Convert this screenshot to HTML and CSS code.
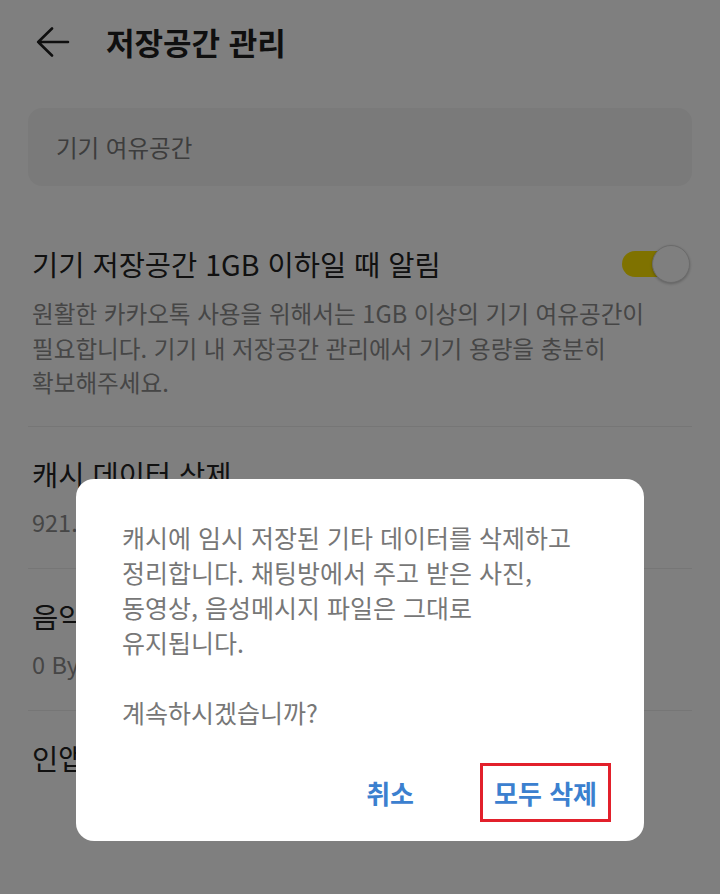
FILE: index.html
```html
<!DOCTYPE html>
<html lang="ko">
<head>
<meta charset="utf-8">
<title>저장공간 관리</title>
<link rel="stylesheet" href="styles.css">
</head>
<body>
<div class="screen">
  <header class="appbar">
    <svg class="back" width="34" height="30" viewBox="0 0 34 30" aria-hidden="true">
      <path d="M16 1.5 L2.2 15 L16 28.5 M2.2 15 H32" fill="none" stroke="#1e1e1e" stroke-width="2.6" stroke-linecap="round" stroke-linejoin="round"/>
    </svg>
    <h1 class="title">저장공간 관리</h1>
  </header>

  <div class="card"><span class="card-label">기기 여유공간</span></div>

  <section class="setting">
    <div class="setting-head">
      <span class="row-title">기기 저장공간 1GB 이하일 때 알림</span>
      <span class="toggle"><span class="track"></span><span class="knob"></span></span>
    </div>
    <p class="desc">원활한 카카오톡 사용을 위해서는 1GB 이상의 기기 여유공간이<br>필요합니다. 기기 내 저장공간 관리에서 기기 용량을 충분히<br>확보해주세요.</p>
  </section>

  <section class="item">
    <div class="row-title">캐시 데이터 삭제</div>
    <div class="row-sub">921.55 MB</div>
  </section>
  <section class="item">
    <div class="row-title">음악 캐시 데이터 삭제</div>
    <div class="row-sub">0 Bytes</div>
  </section>
  <section class="item last">
    <div class="row-title">인앱 브라우저 캐시 삭제</div>
  </section>
</div>

<div class="overlay">
  <div class="dialog" role="dialog">
    <p class="dialog-text">캐시에 임시 저장된 기타 데이터를 삭제하고<br>정리합니다. 채팅방에서 주고 받은 사진,<br>동영상, 음성메시지 파일은 그대로<br>유지됩니다.<br><br>계속하시겠습니까?</p>
    <div class="dialog-actions">
      <button class="btn" type="button">취소</button>
      <button class="btn btn-highlight" type="button">모두 삭제</button>
    </div>
  </div>
</div>
</body>
</html>
```

FILE: styles.css
```css
* { box-sizing: border-box; }

html, body {
  margin: 0;
  padding: 0;
  width: 720px;
  height: 894px;
  overflow: hidden;
  background: #ffffff;
  font-family: "Noto Sans CJK KR", "Noto Sans", Roboto, sans-serif;
}

.screen {
  width: 720px;
  height: 894px;
  background: #ffffff;
}

.appbar {
  height: 84px;
  display: flex;
  align-items: center;
  padding-left: 36px;
  gap: 36px;
}

.back { display: block; flex: none; }

.title {
  margin: 0;
  font-size: 31px;
  font-weight: 700;
  line-height: 36px;
  color: #1e1e1e;
}

.card {
  margin: 24px 28px 0;
  height: 78px;
  border-radius: 14px;
  background: #f5f5f5;
  display: flex;
  align-items: center;
  padding-left: 28px;
}

.card-label {
  font-size: 23.5px;
  line-height: 30px;
  color: #7a7a7a;
}

.setting {
  margin: 0 28px;
  padding: 60px 2px 26px 4px;
  border-bottom: 1px solid #ededed;
}

.setting-head {
  height: 36px;
  display: flex;
  align-items: center;
  justify-content: space-between;
}

.row-title {
  font-size: 28.5px;
  line-height: 36px;
  color: #222222;
  white-space: nowrap;
}

.toggle {
  display: flex;
  align-items: center;
}

.track {
  width: 49px;
  height: 26px;
  border-radius: 13px;
  background: #fee500;
}

.knob {
  width: 38px;
  height: 38px;
  margin-left: -19px;
  border-radius: 50%;
  background: #ffffff;
  border: 1.5px solid #d6d6d6;
  box-shadow: 0 1px 3px rgba(0, 0, 0, 0.25);
}

.desc {
  margin: 14px 0 0;
  font-size: 23.6px;
  line-height: 34.5px;
  color: #8c8c8c;
  white-space: nowrap;
}

.item {
  margin: 0 28px;
  padding: 29px 2px 31px 4px;
  border-bottom: 1px solid #ededed;
}

.item.last { border-bottom: none; }

.row-sub {
  margin-top: 15px;
  font-size: 23.5px;
  line-height: 30px;
  color: #8c8c8c;
}

.overlay {
  position: fixed;
  inset: 0;
  background: rgba(0, 0, 0, 0.5);
  display: flex;
  justify-content: center;
  align-items: flex-end;
  padding-bottom: 53px;
}

.dialog {
  width: 568px;
  background: #ffffff;
  border-radius: 18px;
  padding: 40.5px 33px 19px 46px;
}

.dialog-text {
  margin: 0;
  font-size: 25px;
  line-height: 35px;
  color: #777777;
  white-space: nowrap;
}

.dialog-actions {
  margin-top: 33.5px;
  display: flex;
  justify-content: flex-end;
  gap: 52px;
}

.btn {
  font-family: inherit;
  font-size: 26px;
  font-weight: 700;
  line-height: 53px;
  color: #3b80cf;
  background: transparent;
  border: 3px solid transparent;
  padding: 0 11px;
  margin: 0;
}

.btn-highlight {
  border-color: #e2202b;
}
```
